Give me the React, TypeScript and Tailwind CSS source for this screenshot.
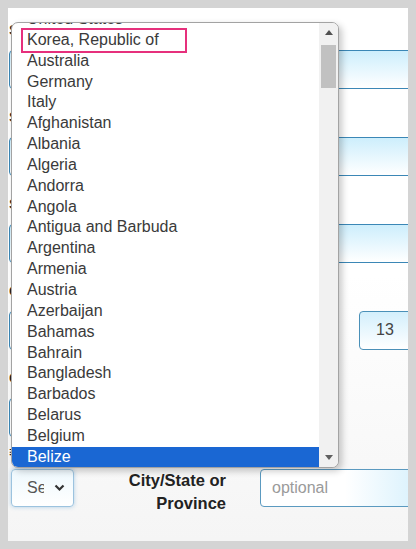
import React from "react";

const countries = [
  "United States",
  "Korea, Republic of",
  "Australia",
  "Germany",
  "Italy",
  "Afghanistan",
  "Albania",
  "Algeria",
  "Andorra",
  "Angola",
  "Antigua and Barbuda",
  "Argentina",
  "Armenia",
  "Austria",
  "Azerbaijan",
  "Bahamas",
  "Bahrain",
  "Bangladesh",
  "Barbados",
  "Belarus",
  "Belgium",
  "Belize",
];

const selected = "Belize";

// labels of the form behind the open list: only their first pixels show
function Label({ text, className = "" }: { text: string; className?: string }) {
  return (
    <div className={`h-[20px] text-[15px] font-bold leading-[20px] text-[#222] ${className}`}>{text}</div>
  );
}

function WideInput({ className = "" }: { className?: string }) {
  return (
    <div
      className={`h-[39px] w-[420px] shrink-0 rounded-[4px] border-[1.5px] border-[#3b87b6] bg-gradient-to-b from-[#cdeefc] to-white ${className}`}
    />
  );
}

function CountryDropdown() {
  return (
    <div className="absolute left-[3px] top-[14px] flex h-[446px] w-[328px] overflow-hidden rounded-[7px] border border-[#a3a3a3] bg-white shadow-[3px_3px_7px_rgba(0,0,0,0.22)]">
      <div className="flex-1 overflow-hidden">
        <ul className="-mt-[14px]">
          {countries.map((c) => (
            <li
              key={c}
              className={`h-[20.85px] whitespace-nowrap pl-[15px] text-[16px] leading-[20.85px] ${
                c === selected ? "bg-[#1a67d3] text-white" : "text-[#3a3a3a]"
              }`}
            >
              {c}
            </li>
          ))}
        </ul>
      </div>
      <div className="flex w-[19px] flex-col bg-[#f1f1f1]">
        <div className="flex h-[17px] items-center justify-center pt-[2px]">
          <span className="h-0 w-0 border-x-[4px] border-b-[5px] border-x-transparent border-b-[#505050]" />
        </div>
        <div className="flex-1 px-[2px] pt-[5px]">
          <div className="h-[43px] bg-[#c1c1c1]" />
        </div>
        <div className="flex h-[17px] items-center justify-center pb-[3px]">
          <span className="h-0 w-0 border-x-[4px] border-t-[5px] border-x-transparent border-t-[#606060]" />
        </div>
      </div>
    </div>
  );
}

export default function App() {
  return (
    <div
      className="h-[549px] w-[416px] bg-[#d4d4d4] p-2"
      style={{ fontFamily: '"Liberation Sans", Arial, sans-serif' }}
    >
      <div className="relative h-full overflow-hidden bg-gradient-to-b from-white via-white to-[#f5f5f5]">
        {/* form behind the open select */}
        <div className="flex flex-col pl-[1px] pt-[12px]">
          <Label text="S" />
          <WideInput className="mt-[10px]" />
          <Label text="S" className="mt-[18px]" />
          <WideInput className="mt-[10px]" />
          <Label text="S" className="mt-[18px]" />
          <WideInput className="mt-[10px]" />
          <Label text="C" className="mt-[18px]" />
          <div className="mt-[10px] flex h-[39px] items-start">
            <div className="h-[39px] w-[330px] shrink-0 rounded-[4px] border-[1.5px] border-[#3b87b6] bg-white" />
            <div className="ml-[20px] h-[39px] w-[80px] shrink-0 rounded-[4px] border-[1.5px] border-[#4a90b8] bg-gradient-to-b from-[#d3effc] to-white pl-[16px] text-[16px] leading-[36px] text-[#444]">
              13
            </div>
          </div>
          <Label text="C" className="mt-[18px]" />
          <div className="mt-[10px] h-[39px] w-[200px] rounded-[4px] border-[1.5px] border-[#3b87b6] bg-white" />
          <Label text="≡" className="mt-[5px]" />
          <div className="mt-[7px] flex items-start">
            <div className="ml-[2px] flex h-[38px] w-[63px] shrink-0 items-center justify-between rounded-[4px] border border-[#9cc3df] bg-gradient-to-b from-[#eef8fd] to-white pl-[15px] pr-[8px] text-[16px] text-[#555] shadow-[0_0_4px_rgba(90,160,210,0.45)]">
              <span className="w-[17px] overflow-hidden whitespace-nowrap leading-[20px]">Se</span>
              <svg width="11" height="8" viewBox="0 0 11 8" fill="none">
                <path d="M1.5 1.5 5.5 5.5 9.5 1.5" stroke="#333" strokeWidth="2.2" />
              </svg>
            </div>
            <div className="ml-[5px] w-[147px] shrink-0 text-right text-[16.5px] font-bold leading-[23px] text-[#222]">
              City/State or
              <br />
              Province
            </div>
            <div className="ml-[34px] h-[38px] w-[170px] shrink-0 rounded-[4px] border-[1.5px] border-[#5b9ac0] bg-gradient-to-l from-[#d3effc] via-white to-white pl-[11px] text-[16px] leading-[35px] text-[#9a9a9a]">
              optional
            </div>
          </div>
        </div>

        <CountryDropdown />

        {/* highlight annotation */}
        <div className="absolute left-[13px] top-[20px] h-[25px] w-[166px] border-[2.5px] border-[#e6307c]" />
      </div>
    </div>
  );
}
